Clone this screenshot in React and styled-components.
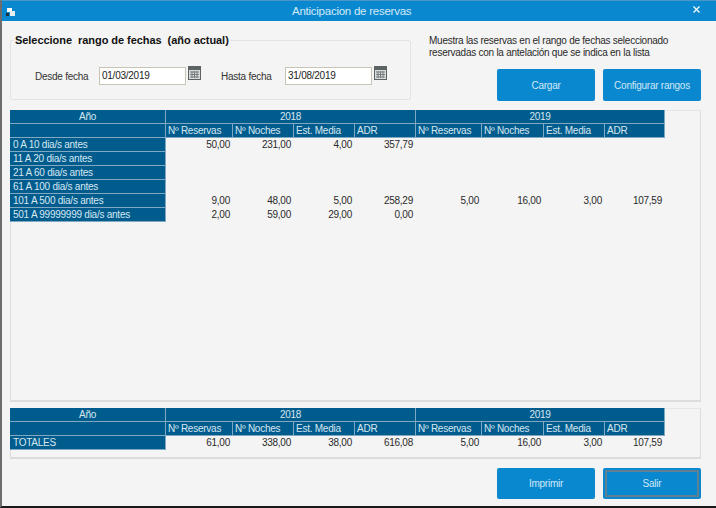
import React from 'react';
import styled, { createGlobalStyle } from 'styled-components';

const years = ['2018', '2019'];
const subHeaders = ['Nº Reservas', 'Nº Noches', 'Est. Media', 'ADR'];

const rows = [
  { label: '0 A 10 dia/s antes', values: ['50,00', '231,00', '4,00', '357,79'] },
  { label: '11 A 20 dia/s antes', values: [] },
  { label: '21 A 60 dia/s antes', values: [] },
  { label: '61 A 100 dia/s antes', values: [] },
  {
    label: '101 A 500 dia/s antes',
    values: ['9,00', '48,00', '5,00', '258,29', '5,00', '16,00', '3,00', '107,59'],
  },
  { label: '501 A 99999999 dia/s antes', values: ['2,00', '59,00', '29,00', '0,00'] },
];

const totals = [
  {
    label: 'TOTALES',
    values: ['61,00', '338,00', '38,00', '616,08', '5,00', '16,00', '3,00', '107,59'],
  },
];

const CalendarIcon = () => (
  <svg width="13" height="14" viewBox="0 0 13 14">
    <rect x="0.5" y="0.5" width="12" height="13" fill="#d9dcdc" stroke="#5d6263" />
    <rect x="1" y="1" width="11" height="3" fill="#5d6263" />
    <path
      d="M2 6h9M2 8.5h9M2 11h9M4 5v7M6.5 5v7M9 5v7"
      stroke="#777c7d"
      strokeWidth="1"
      fill="none"
    />
  </svg>
);

const DataGrid = ({ data, grow }) => (
  <GridPanel $grow={grow}>
    <Grid>
      <YearHead>Año</YearHead>
      {years.map(year => (
        <YearCell key={year}>{year}</YearCell>
      ))}
      <SubHead />
      {years.map(year =>
        subHeaders.map(name => <SubHead key={year + name}>{name}</SubHead>),
      )}
      {data.map(row => (
        <React.Fragment key={row.label}>
          <RowLabel>{row.label}</RowLabel>
          {Array.from({ length: 8 }).map((_, i) => (
            <ValueCell key={i}>{row.values[i]}</ValueCell>
          ))}
        </React.Fragment>
      ))}
    </Grid>
  </GridPanel>
);

const App = () => {
  return (
    <Window>
      <GlobalStyle />
      <TitleBar>
        <AppIcon>
          <svg width="9" height="9" viewBox="0 0 9 9">
            <rect x="1" y="1" width="5" height="4" fill="#ffffff" />
            <rect x="4" y="4" width="5" height="5" fill="#e6eef2" />
            <rect x="0" y="6" width="3" height="3" fill="#1c3340" />
          </svg>
        </AppIcon>
        <Title>Anticipacion de reservas</Title>
        <CloseBtn>
          <svg width="7" height="7" viewBox="0 0 7 7">
            <path d="M0.5 0.5l6 6M6.5 0.5l-6 6" stroke="#ffffff" strokeWidth="1.2" />
          </svg>
        </CloseBtn>
      </TitleBar>
      <Content>
        <TopRow>
          <DateGroup>
            <GroupTitle>Seleccione&nbsp; rango de fechas&nbsp; (año actual)</GroupTitle>
            <DateRow>
              <DateLabel>Desde fecha</DateLabel>
              <DateInput defaultValue="01/03/2019" />
              <IconSlot>
                <CalendarIcon />
              </IconSlot>
              <DateLabel $second>Hasta fecha</DateLabel>
              <DateInput defaultValue="31/08/2019" />
              <IconSlot>
                <CalendarIcon />
              </IconSlot>
            </DateRow>
          </DateGroup>
          <TopRight>
            <Hint>
              Muestra las reservas en el rango de fechas seleccionado
              <br />
              reservadas con la antelación que se indica en la lista
            </Hint>
            <Buttons>
              <ActionBtn>Cargar</ActionBtn>
              <ActionBtn>Configurar rangos</ActionBtn>
            </Buttons>
          </TopRight>
        </TopRow>
        <DataGrid data={rows} grow />
        <DataGrid data={totals} />
        <Footer>
          <ActionBtn $short>Imprimir</ActionBtn>
          <ActionBtn $short $focused>
            Salir
          </ActionBtn>
        </Footer>
      </Content>
    </Window>
  );
};

const GlobalStyle = createGlobalStyle`
  html, body {
    margin: 0;
    padding: 0;
    background: #f4f4f4;
  }
  * {
    box-sizing: border-box;
  }
`;

const Window = styled.div`
  width: 716px;
  height: 508px;
  display: flex;
  flex-direction: column;
  background: #f4f4f4;
  border-left: 2px solid #6d6d6d;
  border-bottom: 2px solid #1a1a1a;
  border-top: 1px solid #4a97c8;
  font-family: 'Liberation Sans', Arial, sans-serif;
  letter-spacing: -0.25px;
  color: #222222;
  overflow: hidden;
`;

const TitleBar = styled.div`
  height: 20px;
  flex: none;
  margin-left: -2px;
  padding: 0 16px 0 6px;
  display: flex;
  align-items: center;
  background: #0a88cf;
`;

const AppIcon = styled.div`
  width: 9px;
  height: 9px;
  display: flex;
`;

const Title = styled.div`
  flex: 1;
  padding-left: 277px;
  font-size: 11.5px;
  color: #d3eaf6;
`;

const CloseBtn = styled.div`
  display: flex;
  margin-bottom: 3px;
`;

const Content = styled.div`
  flex: 1;
  min-height: 0;
  padding: 0 15px 7px 8px;
  display: flex;
  flex-direction: column;
`;

const TopRow = styled.div`
  height: 89px;
  flex: none;
  display: flex;
`;

const DateGroup = styled.fieldset`
  width: 401px;
  height: 66px;
  margin: 13px 0 0;
  padding: 0 0 0 3px;
  border: 1px solid #e3e3e3;
  border-radius: 2px;
`;

const GroupTitle = styled.legend`
  padding: 0 1px;
  font-size: 11px;
  line-height: 13px;
  font-weight: bold;
  letter-spacing: -0.05px;
  color: #111111;
`;

const DateRow = styled.div`
  margin-top: 20px;
  display: flex;
  align-items: flex-start;
`;

const DateLabel = styled.label`
  width: 64px;
  margin-left: ${props => (props.$second ? '20px' : '21px')};
  padding-top: 4px;
  font-size: 10px;
  line-height: 12px;
  color: #333333;
`;

const DateInput = styled.input`
  width: 87px;
  height: 18px;
  padding: 0 2px 2px;
  border: 1px solid #c9c5b4;
  background: #ffffff;
  font-family: inherit;
  font-size: 10px;
  letter-spacing: -0.25px;
  color: #222222;
  outline: none;
`;

const IconSlot = styled.div`
  margin: -1px 0 0 2px;
  width: 13px;
  height: 14px;
  display: flex;
`;

const TopRight = styled.div`
  flex: 1;
  padding: 14px 0 0 18px;
  display: flex;
  flex-direction: column;
`;

const Hint = styled.div`
  font-size: 10px;
  line-height: 12px;
  color: #2a2a2a;
`;

const Buttons = styled.div`
  margin-top: 10px;
  padding-left: 68px;
  display: flex;
  gap: 8px;
`;

const ActionBtn = styled.button`
  width: 98px;
  height: ${props => (props.$short ? '31px' : '32px')};
  padding: 0;
  border: none;
  border-radius: 2px;
  background: #0a88cf;
  color: #cfe8f5;
  font-family: inherit;
  font-size: 10px;
  letter-spacing: -0.25px;
  outline: ${props => (props.$focused ? '2px solid #5f7f92' : 'none')};
  outline-offset: -4px;
`;

const GridPanel = styled.div`
  height: ${props => (props.$grow ? '292px' : '51px')};
  flex: none;
  margin-top: ${props => (props.$grow ? '0' : '6px')};
  border: 1px solid #dcdcdc;
  border-top-color: #e6e6e6;
  border-bottom: 2px solid #dcdcdc;
`;

const Grid = styled.div`
  margin: -1px 0 0 -1px;
  width: 655px;
  display: grid;
  grid-template-columns: 156px 67px 61px 61px 61px 66px 62px 61px 60px;
  grid-auto-rows: 14px;
  font-size: 10px;
  line-height: 13px;
`;

const HeadCell = styled.div`
  background: #015c8e;
  color: #d6e7f0;
  border-right: 1px solid #7fa9c2;
  border-bottom: 1px solid #7fa9c2;
  white-space: nowrap;
  overflow: hidden;
`;

const YearHead = styled(HeadCell)`
  text-align: center;
`;

const YearCell = styled(HeadCell)`
  grid-column: span 4;
  text-align: center;
`;

const SubHead = styled(HeadCell)`
  padding-left: 2px;
`;

const RowLabel = styled(HeadCell)`
  padding-left: 3px;
`;

const ValueCell = styled.div`
  padding-right: 3px;
  text-align: right;
  color: #2a2a2a;
  white-space: nowrap;
`;

const Footer = styled.div`
  margin-top: 9px;
  display: flex;
  justify-content: flex-end;
  gap: 8px;
`;

export default App;
